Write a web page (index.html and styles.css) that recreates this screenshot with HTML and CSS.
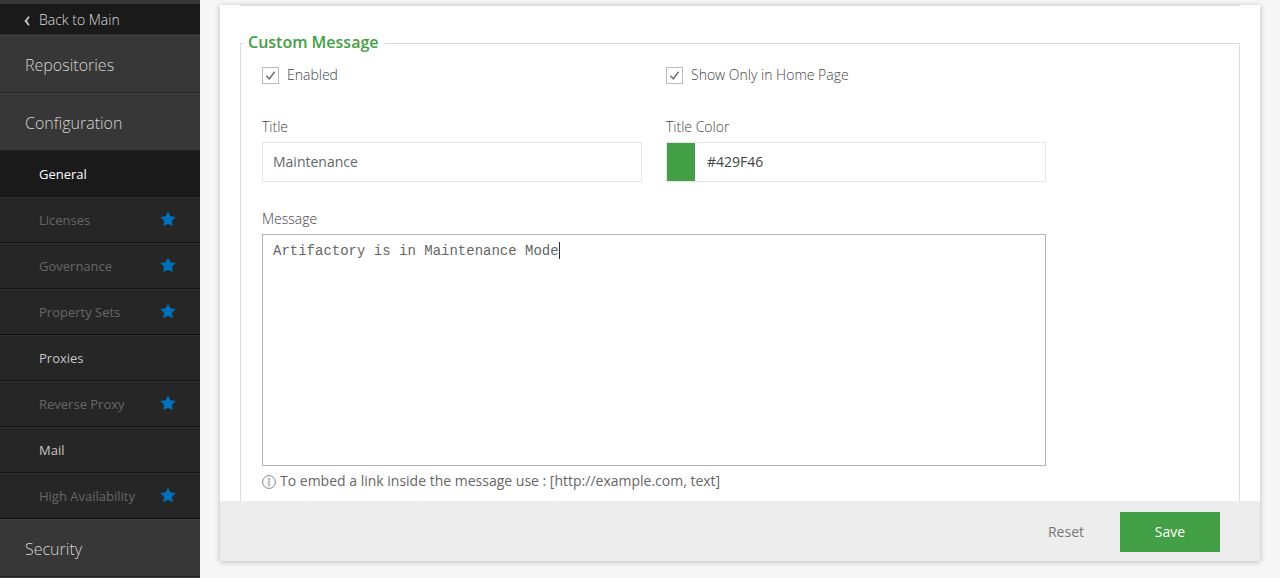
FILE: index.html
```html
<!DOCTYPE html>
<html lang="en">
<head>
<meta charset="utf-8">
<title>General Configuration</title>
<link rel="stylesheet" href="styles.css">
</head>
<body>
<svg class="symbols" aria-hidden="true">
  <symbol id="star" viewBox="0 0 16 16"><path d="M8 .5 10.4 5.2 15.7 6 12 9.8 12.8 15 8 13 3.2 15 4 9.8.3 6 5.6 5.2Z" fill="#0070b8"/></symbol>
  <symbol id="tick" viewBox="0 0 17 17"><path d="M4.4 8.7 7.4 11.7 12.6 4.8" fill="none" stroke="#737373" stroke-width="1.6"/></symbol>
</svg>
<div class="app">
  <nav class="sidebar">
    <div class="sidebar-top"></div>
    <a class="back" href="#"><svg class="chevron" viewBox="0 0 6 10" aria-hidden="true"><path d="M4.9.7Q3.8 3 1.6 5 3.8 7 4.9 9.3" fill="none" stroke="#c4c4c4" stroke-width="1.8"/></svg>Back to Main</a>
    <a class="section" href="#">Repositories</a>
    <a class="section" href="#">Configuration</a>
    <a class="item active" href="#">General</a>
    <a class="item locked" href="#">Licenses<svg class="star"><use href="#star"/></svg></a>
    <a class="item locked" href="#">Governance<svg class="star"><use href="#star"/></svg></a>
    <a class="item locked" href="#">Property Sets<svg class="star"><use href="#star"/></svg></a>
    <a class="item" href="#">Proxies</a>
    <a class="item locked" href="#">Reverse Proxy<svg class="star"><use href="#star"/></svg></a>
    <a class="item" href="#">Mail</a>
    <a class="item locked" href="#">High Availability<svg class="star"><use href="#star"/></svg></a>
    <a class="section" href="#">Security</a>
    <div class="sidebar-end"></div>
  </nav>
  <main class="main">
    <form class="panel">
      <div class="panel-body">
        <div class="divider"></div>
        <fieldset class="group">
          <legend class="legend">Custom Message</legend>
          <div class="fields">
            <label class="check"><span class="box"><input class="box-input" type="checkbox" checked><svg class="tick"><use href="#tick"/></svg></span>Enabled</label>
            <label class="check"><span class="box"><input class="box-input" type="checkbox" checked><svg class="tick"><use href="#tick"/></svg></span>Show Only in Home Page</label>
            <div class="field">
              <label class="label" for="title">Title</label>
              <input class="control text" id="title" type="text" value="Maintenance">
            </div>
            <div class="field">
              <label class="label" for="color">Title Color</label>
              <div class="control color">
                <span class="swatch"></span>
                <input class="color-input" id="color" type="text" value="#429F46">
              </div>
            </div>
            <div class="field wide">
              <label class="label" for="message">Message</label>
              <div class="message-wrap">
                <textarea class="message" id="message" spellcheck="false">Artifactory is in Maintenance Mode</textarea>
                <span class="caret"></span>
              </div>
              <p class="hint"><svg class="info" viewBox="0 0 14 14" aria-hidden="true"><circle cx="7" cy="7" r="6.4" fill="none" stroke="#777" stroke-width=".9"/><path d="M6.2 3.2h1.6v1.3H6.2zM6.3 5.8h1.4v5H6.3z" fill="none" stroke="#888" stroke-width=".6"/></svg>To embed a link inside the message use : [http://example.com, text]</p>
            </div>
          </div>
        </fieldset>
      </div>
      <div class="actions">
        <button class="reset" type="reset">Reset</button>
        <button class="save" type="button">Save</button>
      </div>
    </form>
  </main>
</div>
</body>
</html>
```
FILE: styles.css
```css
* { box-sizing: border-box; }
body {
  margin: 0;
  background: #f7f7f7;
  color: #666;
  font: 14px/20px "Open Sans", "Noto Sans", sans-serif;
}
.symbols { display: none; }
.app { display: flex; height: 100vh; overflow: hidden; }

.sidebar {
  display: flex;
  flex-direction: column;
  flex: 0 0 200px;
  background: #373737;
}
.sidebar > * { flex-shrink: 0; }
.sidebar a { display: flex; align-items: center; text-decoration: none; }
.sidebar-top { height: 5px; border-bottom: 1px solid #161616; }
.back {
  height: 30px;
  gap: 9px;
  padding-left: 24px;
  background: #1a1a1a;
  border-bottom: 1px solid #2a2a2a;
}
.sidebar .back { color: #ddd; font-weight: 300; }
.chevron { width: 6px; height: 10px; margin-top: 3px; }
.section {
  height: 58px;
  padding: 2px 25px 0;
  border-top: 1px solid #424242;
  border-bottom: 1px solid #242424;
  color: #d4d4d4;
  font-size: 16px;
  font-weight: 300;
}
.item {
  justify-content: space-between;
  height: 46px;
  padding: 0 24px 0 39px;
  background: #262626;
  border-top: 1px solid #303030;
  border-bottom: 1px solid #121212;
  color: #c4c4c4;
  font-size: 13px;
  font-weight: 500;
}
.item.active { background: #1a1a1a; border-top-color: #1a1a1a; color: #fff; }
.item.locked { color: #666; font-weight: 400; }
.star { width: 16px; height: 16px; margin-bottom: 3px; }
.sidebar-end { height: 58px; border-top: 1px solid #424242; }

.main { flex: 1; min-width: 0; padding: 5px 20px 17px; }
.panel {
  display: flex;
  flex-direction: column;
  height: 100%;
  background: #fff;
  box-shadow: 0 1px 6px rgba(0, 0, 0, .25);
}
.panel-body { flex: 1; min-height: 0; overflow: hidden; padding: 0 20px; }
.divider { height: 1px; margin-bottom: 26px; background: #ddd; }
.group {
  min-width: 0;
  min-height: 100%;
  margin: 0;
  padding: 11px 21px 20px;
  border: 1px solid #ddd;
}
.group > .legend {
  margin-left: -18px;
  padding: 0 4px 2px;
  color: #429f46;
  font-size: 16px;
  font-weight: 600;
  line-height: 20px;
}
.fields {
  display: grid;
  grid-template-columns: repeat(2, minmax(0, 380px));
  column-gap: 24px;
}
.check {
  display: flex;
  align-items: center;
  gap: 8px;
  margin-bottom: 32px;
  color: #444;
  font-weight: 300;
}
.box { display: grid; width: 17px; height: 17px; }
.box-input, .tick { grid-area: 1 / 1; width: 17px; height: 17px; margin: 0; }
.box-input { appearance: none; border: 1px solid #bbb; background: #fff; }
.tick { pointer-events: none; visibility: hidden; }
.box-input:checked + .tick { visibility: visible; }
.field { margin-bottom: 27px; }
.wide { grid-column: 1 / -1; margin-bottom: 0; }
.label { display: block; margin-bottom: 5px; color: #444; font-weight: 300; }
.control {
  width: 100%;
  height: 40px;
  border: 1px solid #e6e6e6;
  background: #fff;
}
.text, .color-input { color: #666; font: inherit; }
.text { padding: 0 10px 2px; }
.color { display: flex; }
.swatch { width: 28px; background: #429f46; }
.color-input {
  flex: 1;
  min-width: 0;
  padding: 0 12px;
  border: 0;
  background: none;
  color: #444;
}
.message-wrap { position: relative; }
.message {
  display: block;
  width: 100%;
  height: 232px;
  padding: 7px 10px;
  border: 1px solid #b3b3b3;
  outline: 0;
  resize: none;
  color: #666;
  font: 14px/18px "Liberation Mono", monospace;
}
.caret {
  position: absolute;
  left: 297px;
  top: 8px;
  width: 1px;
  height: 17px;
  background: #333;
}
.hint { display: flex; align-items: center; gap: 4px; margin: 5px 0 0; }
.info { width: 14px; height: 14px; margin-top: 2px; }

.actions {
  display: flex;
  align-items: center;
  justify-content: flex-end;
  flex: 0 0 60px;
  padding: 2px 40px 0;
  gap: 20px;
  background: #ededed;
}
.actions button { height: 40px; border: 0; font: inherit; cursor: pointer; }
.reset { padding: 0 16px; background: none; color: #777; }
.save { width: 100px; background: #429f46; color: #fff; }
.actions .save { font-weight: 500; }
```
